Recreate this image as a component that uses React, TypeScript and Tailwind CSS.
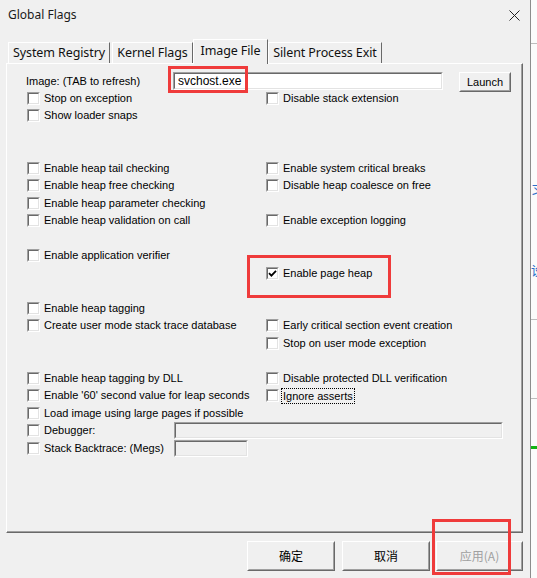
import React from "react";

type Cell = { label: string; checked?: boolean; focus?: boolean } | null;

const Box = ({ checked }: { checked?: boolean }) => (
  <span className="box-border flex w-[13px] h-[13px] shrink-0 border border-t-[#a0a0a0] border-l-[#a0a0a0] border-r-white border-b-white">
    <span className="box-border flex flex-1 items-center justify-center bg-white border border-t-[#696969] border-l-[#696969] border-r-[#e3e3e3] border-b-[#e3e3e3]">
      {checked && (
        <svg width="9" height="9" viewBox="0 0 9 9">
          <path d="M1 4.2 L3.4 6.6 L8 1.8" stroke="#000" strokeWidth="1.8" fill="none" />
        </svg>
      )}
    </span>
  </span>
);

const Check = ({ cell }: { cell: Cell }) => {
  if (!cell) return null;
  return (
    <div className="flex items-center">
      <Box checked={cell.checked} />
      {cell.focus ? (
        <span className="ml-[3px] px-px outline outline-1 outline-dotted outline-black leading-[14px]">{cell.label}</span>
      ) : (
        <span className="ml-[4px] whitespace-nowrap">{cell.label}</span>
      )}
    </div>
  );
};

const rows: [Cell, Cell][] = [
  [{ label: "Stop on exception" }, { label: "Disable stack extension" }],
  [{ label: "Show loader snaps" }, null],
  [null, null],
  [null, null],
  [{ label: "Enable heap tail checking" }, { label: "Enable system critical breaks" }],
  [{ label: "Enable heap free checking" }, { label: "Disable heap coalesce on free" }],
  [{ label: "Enable heap parameter checking" }, null],
  [{ label: "Enable heap validation on call" }, { label: "Enable exception logging" }],
  [null, null],
  [{ label: "Enable application verifier" }, null],
  [null, { label: "Enable page heap", checked: true }],
  [null, null],
  [{ label: "Enable heap tagging" }, null],
  [{ label: "Create user mode stack trace database" }, { label: "Early critical section event creation" }],
  [null, { label: "Stop on user mode exception" }],
  [null, null],
  [{ label: "Enable heap tagging by DLL" }, { label: "Disable protected DLL verification" }],
  [{ label: "Enable '60' second value for leap seconds" }, { label: "Ignore asserts", focus: true }],
  [{ label: "Load image using large pages if possible" }, null],
];

const Sunken = ({ className, white, children }: { className: string; white?: boolean; children?: React.ReactNode }) => (
  <div className={`box-border flex border border-t-[#a0a0a0] border-l-[#a0a0a0] border-r-white border-b-white ${className}`}>
    <div
      className={`box-border flex flex-1 items-center border border-t-[#696969] border-l-[#696969] border-r-[#e3e3e3] border-b-[#e3e3e3] ${
        white ? "bg-white" : "bg-[#f0f0f0]"
      }`}
    >
      {children}
    </div>
  </div>
);

const Raised = ({ className, children, textClass }: { className: string; children: React.ReactNode; textClass?: string }) => (
  <div className={`box-border flex border border-t-white border-l-white border-r-[#696969] border-b-[#696969] ${className}`}>
    <div
      className={`box-border flex flex-1 items-center justify-center bg-[#f0f0f0] border border-t-[#f0f0f0] border-l-[#f0f0f0] border-r-[#a0a0a0] border-b-[#a0a0a0] ${textClass ?? ""}`}
    >
      {children}
    </div>
  </div>
);

const Tab = ({ label, className }: { label: string; className: string }) => (
  <div
    className={`box-border flex items-center justify-center h-[21px] border-t border-l border-r border-t-white border-l-white border-r-[#696969] bg-[#f0f0f0] tracking-[-0.1px] ${className}`}
  >
    {label}
  </div>
);

export default function App() {
  return (
    <div
      className="relative w-[537px] h-[578px] bg-[#f0f0f0] flex overflow-hidden text-black"
      style={{ fontFamily: '"Liberation Sans", Arial, sans-serif' }}
    >
      <div className="box-border w-[531px] h-full border-r border-[#8c8c8c] flex flex-col">
        {/* Title bar */}
        <div
          className="h-[30px] flex items-center justify-between pl-[8px] pr-[10px] text-[12px] text-[#1a1a1a]"
          style={{ fontFamily: '"Noto Sans", sans-serif' }}
        >
          <span className="-mt-[1px]">Global Flags</span>
          <svg width="11" height="11" viewBox="0 0 11 11">
            <path d="M0.5 0.5 L10.5 10.5 M10.5 0.5 L0.5 10.5" stroke="#222" strokeWidth="1" fill="none" />
          </svg>
        </div>

        {/* Tabs */}
        <div
          className="h-[33px] flex items-end text-[12.5px] text-[#111]"
          style={{ fontFamily: '"Noto Sans", sans-serif' }}
        >
          <Tab label="System Registry" className="ml-[8px] w-[102px]" />
          <Tab label="Kernel Flags" className="ml-[2px] w-[81px]" />
          <div className="relative z-10 box-border flex items-start justify-center pt-[2px] w-[75px] h-[25px] -mb-[1px] border-t border-l border-r border-t-white border-l-white border-r-[#696969] bg-[#f0f0f0] tracking-[-0.1px]">
            Image File
          </div>
          <Tab label="Silent Process Exit" className="w-[114px]" />
        </div>

        {/* Panel */}
        <div className="box-border ml-[6px] w-[517px] h-[470px] flex border-t border-l border-t-white border-l-white border-r border-b border-r-[#696969] border-b-[#696969]">
          <div className="box-border flex-1 flex flex-col border-r border-b border-r-[#a0a0a0] border-b-[#a0a0a0] text-[11px]">
            {/* Image row */}
            <div className="mt-[8px] h-[17.25px] flex items-start">
              <span className="ml-[19px] w-[147px] mt-[1px]">Image: (TAB to refresh)</span>
              <Sunken white className="w-[270px] h-[18px]">
                <span className="pl-[3px] text-[12px]">svchost.exe</span>
              </Sunken>
              <Raised className="ml-[16px] w-[52px] h-[20px]">Launch</Raised>
            </div>

            {rows.map(([l, r], i) => (
              <div key={i} className="h-[17.5px] flex items-center">
                <div className="ml-[20px] w-[239px]">
                  <Check cell={l} />
                </div>
                <div>
                  <Check cell={r} />
                </div>
              </div>
            ))}

            <div className="h-[17.5px] flex items-center">
              <div className="ml-[20px] w-[147px]">
                <Check cell={{ label: "Debugger:" }} />
              </div>
              <Sunken className="w-[329px] h-[17px]" />
            </div>
            <div className="h-[17.5px] flex items-center">
              <div className="ml-[20px] w-[147px]">
                <Check cell={{ label: "Stack Backtrace: (Megs)" }} />
              </div>
              <Sunken className="w-[74px] h-[17px]" />
            </div>
          </div>
        </div>

        {/* Buttons */}
        <div
          className="mt-[8px] flex justify-end pr-[7px] text-[12px]"
          style={{ fontFamily: '"Noto Sans CJK SC", "Noto Sans", sans-serif' }}
        >
          <Raised className="w-[88px] h-[30px]">确定</Raised>
          <Raised className="ml-[7px] w-[88px] h-[30px]">取消</Raised>
          <Raised className="ml-[6px] w-[87px] h-[30px]" textClass="text-[#a0a0a0]">
            应用(A)
          </Raised>
        </div>
      </div>

      {/* Background window fragment */}
      <div className="flex-1 flex flex-col bg-[#fbfbfb] overflow-hidden" style={{ fontFamily: '"Noto Sans CJK SC", sans-serif' }}>
        <div className="h-[43px]" />
        <div className="h-px bg-[#bdbdbd]" />
        <div className="h-[138px]" />
        <div className="h-[16px] text-[13px] leading-[16px] text-[#2a6fc9] whitespace-nowrap">习</div>
        <div className="h-[64px]" />
        <div className="h-[16px] text-[13px] leading-[16px] text-[#2a6fc9] whitespace-nowrap">设</div>
        <div className="h-[41px]" />
        <div className="h-px bg-[#bdbdbd]" />
        <div className="h-[78px]" />
        <div className="h-px bg-[#bdbdbd]" />
        <div className="h-[47px]" />
        <div className="h-[3px] bg-[#13b313]" />
      </div>

      {/* Red annotation boxes */}
      <div className="absolute left-[168px] top-[66px] w-[80px] h-[27px] border-[3px] border-[#ef3b3b]" />
      <div className="absolute left-[247px] top-[255px] w-[144px] h-[43px] border-[3px] border-[#ef3b3b]" />
      <div className="absolute left-[432px] top-[519px] w-[79px] h-[56px] border-[3px] border-[#ef3b3b]" />
    </div>
  );
}
